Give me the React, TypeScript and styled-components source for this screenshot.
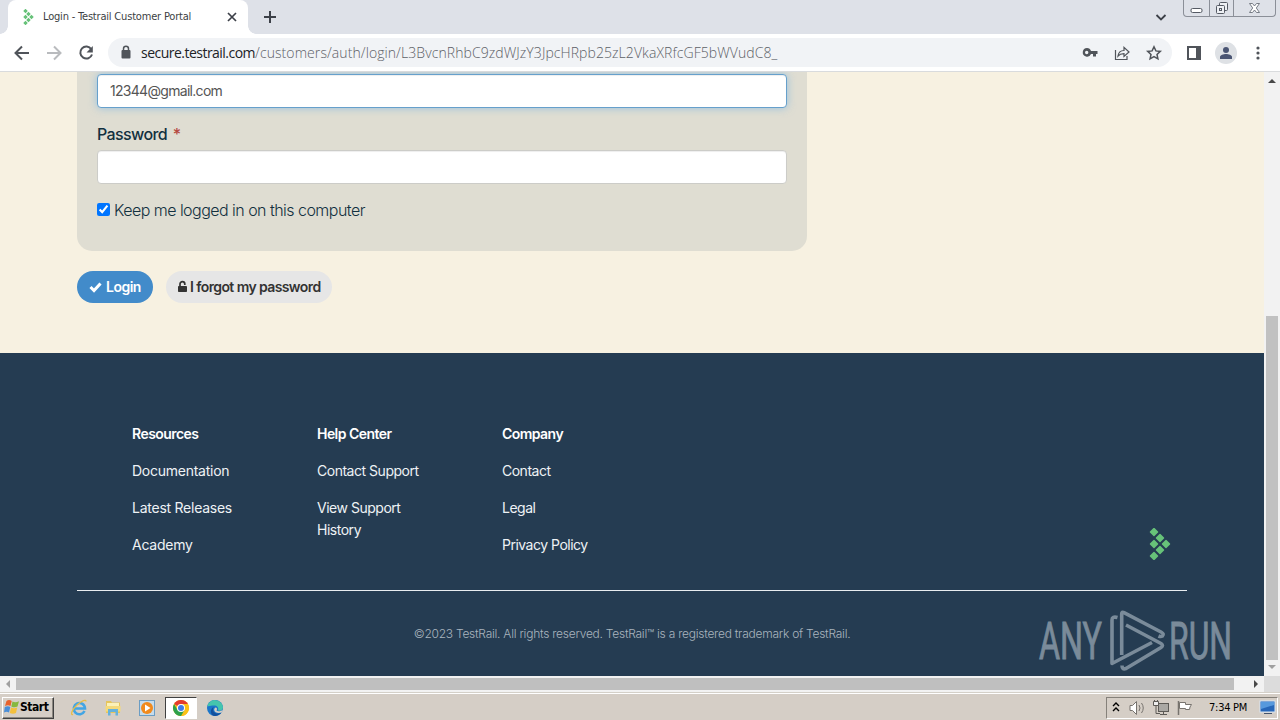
import React, { useState } from 'react';
import styled, { createGlobalStyle } from 'styled-components';

const FONT_BODY = "Inter, 'Liberation Sans', sans-serif";
const FONT_SYSTEM = "'DejaVu Sans Condensed', 'DejaVu Sans', sans-serif";
const FONT_URL = "'Open Sans', 'Noto Sans', sans-serif";

const COLOR_ICON = '#50545a';
const COLOR_NAVY = '#253c52';
const COLOR_INK = '#12303f';

const GlobalStyle = createGlobalStyle`
  * {
    box-sizing: border-box;
  }
  body {
    margin: 0;
    overflow: hidden;
  }
  p, ul, h4 {
    margin: 0;
    padding: 0;
  }
  svg {
    flex: none;
  }
`;

const StyledScreen = styled.div`
  width: 1280px;
  height: 720px;
  display: flex;
  flex-direction: column;
  overflow: hidden;
  background-color: #fff;
  font-family: ${FONT_BODY};
`;

type TextProps = { $tracking?: number };

/* browser chrome */

const StyledTabStrip = styled.div`
  height: 34px;
  flex: none;
  display: flex;
  align-items: flex-start;
  padding-left: 8px;
  background-color: #dee1e8;
`;

const StyledTab = styled.div`
  width: 240px;
  height: 34px;
  display: flex;
  align-items: center;
  padding: 0 10px 0 15px;
  border-radius: 8px 8px 0 0;
  background-color: #fff;
  position: relative;
  &::before,
  &::after {
    content: '';
    position: absolute;
    bottom: 0;
    width: 8px;
    height: 8px;
  }
  &::before {
    left: -8px;
    background: radial-gradient(circle at 0 0, transparent 7.5px, #fff 8px);
  }
  &::after {
    right: -8px;
    background: radial-gradient(circle at 100% 0, transparent 7.5px, #fff 8px);
  }
`;

const StyledTabTitle = styled.span<TextProps>`
  flex: 1;
  margin-left: 9px;
  font-family: ${FONT_SYSTEM};
  font-size: 11px;
  line-height: 16px;
  letter-spacing: ${({ $tracking = 0 }) => $tracking}px;
  white-space: nowrap;
  color: #3c3f44;
`;

const StyledNewTab = styled.div`
  height: 34px;
  display: flex;
  align-items: center;
  margin-left: 15px;
`;

const StyledTabSearch = styled.div`
  height: 34px;
  display: flex;
  align-items: center;
  margin-left: auto;
  margin-right: 16px;
`;

const StyledWindowControls = styled.div`
  width: 93px;
  height: 17px;
  display: flex;
  margin-right: 4px;
  border: 1px solid #8b8f98;
  border-top: 0;
  border-radius: 0 0 4px 4px;
`;

const StyledWindowButton = styled.div<{ $width: number }>`
  width: ${({ $width }) => $width}px;
  display: flex;
  align-items: center;
  justify-content: center;
  & + & {
    border-left: 1px solid #8b8f98;
  }
`;

const StyledToolbar = styled.div`
  height: 38px;
  flex: none;
  display: flex;
  align-items: center;
  padding: 0 13px;
  border-bottom: 1px solid #d9dbdd;
  background-color: #fff;
`;

const StyledNavigation = styled.div`
  width: 95px;
  display: flex;
  gap: 14px;
`;

const StyledOmnibox = styled.div`
  width: 1064px;
  height: 29px;
  flex: none;
  display: flex;
  align-items: center;
  padding: 0 9px;
  border-radius: 15px;
  background-color: #f1f3f6;
`;

const StyledUrl = styled.span<TextProps>`
  flex: 1;
  margin-left: 6px;
  font-family: ${FONT_URL};
  font-size: 14px;
  font-weight: 300;
  line-height: 20px;
  letter-spacing: ${({ $tracking = 0 }) => $tracking}px;
  white-space: nowrap;
  color: #5d6167;
`;

const StyledHost = styled.span<TextProps>`
  font-weight: 400;
  letter-spacing: ${({ $tracking = 0 }) => $tracking}px;
  color: #202226;
`;

const StyledOmniboxIcons = styled.div`
  display: flex;
  gap: 14px;
`;

const StyledToolbarIcons = styled.div`
  display: flex;
  align-items: center;
  margin-left: 13px;
`;

const StyledAvatar = styled.div`
  width: 22px;
  height: 22px;
  display: flex;
  align-items: center;
  justify-content: center;
  margin: 0 18px 0 12px;
  border-radius: 11px;
  background-color: #dee1e5;
`;

/* page */

const StyledViewport = styled.div`
  height: 604px;
  flex: none;
  display: flex;
`;

const StyledPage = styled.main`
  width: 1264px;
  height: 604px;
  display: flex;
  flex-direction: column;
  overflow: hidden;
  background-color: #f7f1e1;
`;

const StyledFormArea = styled.form`
  height: 281px;
  flex: none;
  padding-left: 77px;
`;

const StyledPanel = styled.div`
  width: 730px;
  height: 179px;
  display: flex;
  flex-direction: column;
  padding: 2px 20px 0;
  border-radius: 0 0 15px 15px;
  background-color: #dfddd2;
`;

const StyledInput = styled.input<{ $focused?: boolean }>`
  width: 690px;
  height: 34px;
  flex: none;
  padding: 0 12px 1px;
  border: 1px solid ${({ $focused }) => ($focused ? '#66a0cc' : '#ccccc8')};
  border-radius: 4px;
  outline: 0;
  box-shadow: ${({ $focused }) =>
    $focused
      ? 'inset 0 1px 1px rgba(0, 0, 0, 0.07), 0 0 8px rgba(102, 175, 233, 0.6)'
      : 'inset 0 1px 1px rgba(0, 0, 0, 0.07)'};
  background-color: #fff;
  font-family: ${FONT_BODY};
  font-size: 14px;
  letter-spacing: -0.7px;
  color: #555;
`;

const StyledLabel = styled.label<TextProps>`
  margin-top: 15px;
  margin-bottom: 4px;
  font-size: 16px;
  font-weight: 500;
  line-height: 23px;
  letter-spacing: ${({ $tracking = 0 }) => $tracking}px;
  color: ${COLOR_INK};
`;

const StyledRequired = styled.span`
  margin-left: 2px;
  color: #b5483f;
`;

const StyledRemember = styled.label<TextProps>`
  display: flex;
  align-items: center;
  gap: 4px;
  margin-top: 15px;
  font-size: 16px;
  font-weight: 300;
  line-height: 23px;
  letter-spacing: ${({ $tracking = 0 }) => $tracking}px;
  white-space: nowrap;
  color: ${COLOR_INK};
  input {
    width: 13px;
    height: 13px;
    margin: 0 0 2px;
    accent-color: #0075ff;
  }
`;

const StyledActions = styled.div`
  display: flex;
  gap: 13px;
  margin-top: 20px;
`;

const StyledButton = styled.button<{ $primary?: boolean; $width: number } & TextProps>`
  width: ${({ $width }) => $width}px;
  height: 32px;
  display: flex;
  align-items: center;
  gap: ${({ $primary }) => ($primary ? 4 : 2)}px;
  padding: 0 0 1px 12px;
  border: 0;
  border-radius: 16px;
  background-color: ${({ $primary }) => ($primary ? '#428bca' : '#e6e6e6')};
  font-family: ${FONT_BODY};
  font-size: 14px;
  font-weight: 600;
  letter-spacing: ${({ $tracking = 0 }) => $tracking}px;
  white-space: nowrap;
  color: ${({ $primary }) => ($primary ? '#fff' : '#333')};
`;

const StyledFooter = styled.footer`
  height: 323px;
  flex: none;
  padding: 70px 77px 0;
  background-color: ${COLOR_NAVY};
  color: #fff;
`;

const StyledFooterTop = styled.div`
  height: 168px;
  display: flex;
  padding-left: 55px;
  border-bottom: 1px solid #e9edf0;
`;

const StyledColumn = styled.ul`
  width: 185px;
  list-style: none;
`;

const StyledColumnTitle = styled.h4<TextProps>`
  margin-bottom: 15px;
  font-size: 14px;
  font-weight: 600;
  line-height: 22px;
  letter-spacing: ${({ $tracking = 0 }) => $tracking}px;
`;

const StyledColumnItem = styled.li<TextProps>`
  width: 120px;
  margin-bottom: 15px;
  font-size: 14px;
  font-weight: 400;
  line-height: 22px;
  letter-spacing: ${({ $tracking = 0 }) => $tracking}px;
  color: #eef2f5;
`;

const StyledFooterLogo = styled.div`
  margin: 105px 16px 0 auto;
`;

const StyledCopyright = styled.p<TextProps>`
  margin-top: 33px;
  font-size: 12px;
  font-weight: 300;
  line-height: 20px;
  letter-spacing: ${({ $tracking = 0 }) => $tracking}px;
  text-align: center;
  color: #a9b4be;
`;

const StyledWatermark = styled.div`
  position: absolute;
  left: 1036px;
  top: 608px;
  svg {
    display: block;
  }
`;

const StyledVerticalScroll = styled.div`
  width: 16px;
  height: 604px;
  display: flex;
  flex-direction: column;
  align-items: center;
  padding: 5px 0;
  background-color: #f2f2f2;
`;

const StyledVerticalThumb = styled.div`
  width: 12px;
  height: 344px;
  margin-top: auto;
  margin-bottom: 3px;
  background-color: #c1c1c1;
`;

const StyledHorizontalScroll = styled.div`
  height: 16px;
  flex: none;
  display: flex;
  align-items: center;
  background-color: #f2f2f2;
`;

const StyledHorizontalThumb = styled.div`
  width: 1218px;
  height: 12px;
  flex: none;
  background-color: #bfbfbf;
`;

const StyledScrollArrow = styled.div<{ $end?: boolean }>`
  width: ${({ $end }) => ($end ? 30 : 16)}px;
  display: flex;
  justify-content: ${({ $end }) => ($end ? 'flex-end' : 'center')};
  padding-right: ${({ $end }) => ($end ? 4 : 0)}px;
`;

const StyledScrollCorner = styled.div`
  width: 16px;
  height: 16px;
  background-color: #dcdcdc;
`;

/* taskbar */

const StyledTaskbar = styled.div`
  height: 28px;
  flex: none;
  display: flex;
  align-items: center;
  padding: 2px 2px 0;
  border-top: 1px solid #d4d0c8;
  box-shadow: inset 0 1px 0 #fff;
  background-color: #d5cec6;
`;

const StyledStart = styled.div<TextProps>`
  width: 52px;
  height: 22px;
  display: flex;
  align-items: center;
  padding-left: 1px;
  padding-bottom: 1px;
  border: 1px solid;
  border-color: #fff #404040 #404040 #fff;
  box-shadow: inset -1px -1px 0 #8b8780;
  font-family: ${FONT_SYSTEM};
  font-size: 12px;
  font-weight: 700;
  letter-spacing: ${({ $tracking = 0 }) => $tracking}px;
  color: #000;
`;

const StyledQuickLaunch = styled.div`
  display: flex;
  margin-left: 9px;
`;

const StyledTask = styled.div<{ $active?: boolean }>`
  width: 32px;
  height: 22px;
  display: flex;
  align-items: center;
  justify-content: center;
  margin-right: 2px;
  border: 1px solid;
  border-color: ${({ $active }) =>
    $active ? '#404040 #fff #fff #404040' : 'transparent'};
  background-color: ${({ $active }) => ($active ? '#fff' : 'transparent')};
`;

const StyledTray = styled.div`
  width: 172px;
  height: 22px;
  display: flex;
  align-items: center;
  margin-left: auto;
  padding-left: 5px;
  border: 1px solid;
  border-color: #85817a #fff #fff #85817a;
`;

const StyledTrayIcon = styled.div`
  display: flex;
  margin-left: 6px;
  &:nth-of-type(1) {
    margin-left: 8px;
  }
`;

const StyledClock = styled.span<TextProps>`
  width: 50px;
  margin-left: 15px;
  font-family: ${FONT_SYSTEM};
  font-size: 11px;
  letter-spacing: ${({ $tracking = 0 }) => $tracking}px;
  white-space: nowrap;
  color: #000;
`;

const DIAMONDS = [
  [5, 4],
  [11, 10],
  [17, 16],
  [11, 22],
  [5, 28],
  [5, 16],
];

const TestRailLogo: React.FC<{ width: number; height: number }> = ({
  width,
  height,
}) => (
  <svg width={width} height={height} viewBox="0 0 22 32">
    {DIAMONDS.map(([x, y]) => (
      <rect
        key={`${x}-${y}`}
        x={x - 3.2}
        y={y - 3.2}
        width="6.4"
        height="6.4"
        rx="0.7"
        fill="#67c279"
        transform={`rotate(45 ${x} ${y})`}
      />
    ))}
  </svg>
);

type TriangleProps = { direction: 'up' | 'down' | 'left' | 'right'; muted?: boolean };
const TRIANGLES = {
  up: '0,6 4,2 8,6',
  down: '0,2 4,6 8,2',
  left: '6,0 2,4 6,8',
  right: '2,0 6,4 2,8',
};
const Triangle: React.FC<TriangleProps> = ({ direction, muted }) => (
  <svg width="8" height="8">
    <polygon points={TRIANGLES[direction]} fill={muted ? '#a0a0a0' : '#484848'} />
  </svg>
);

const Watermark: React.FC = () => (
  <StyledWatermark>
    <svg width="204" height="66" opacity="0.6">
      <g
        fill="#b3c0ca"
        stroke="#b3c0ca"
        strokeWidth="0.9"
        fontFamily="Roboto, sans-serif"
        fontSize="52"
      >
        <text x="3" y="51" textLength="63" lengthAdjust="spacingAndGlyphs">
          ANY
        </text>
        <text x="133" y="51" textLength="63" lengthAdjust="spacingAndGlyphs">
          RUN
        </text>
      </g>
      <g
        fill="none"
        stroke="#b3c0ca"
        strokeWidth="3.6"
        strokeLinejoin="round"
      >
        <path d="M85.700 47V6q0-2.500 2.300-1.300L125 24q3.500 2 1.500 4-1.800 1-4 0" />
        <path d="M90 17l35 18.500q3 2 0 4L90 60.500q-4 1.500-4-3" />
        <path d="M81.500 9.500q-5.500-1.500-5.500 2.500v43.500L116 34.500" />
      </g>
    </svg>
  </StyledWatermark>
);

const COLUMNS = [
  {
    title: 'Resources',
    tracking: -0.25,
    items: ['Documentation', 'Latest Releases', 'Academy'],
  },
  {
    title: 'Help Center',
    tracking: -0.48,
    items: ['Contact Support', 'View Support History'],
  },
  {
    title: 'Company',
    tracking: -0.5,
    items: ['Contact', 'Legal', 'Privacy Policy'],
  },
];

const BrowserChrome: React.FC = () => (
  <>
    <StyledTabStrip>
      <StyledTab>
        <TestRailLogo width={11} height={16} />
        <StyledTabTitle $tracking={-0.19}>
          Login - Testrail Customer Portal
        </StyledTabTitle>
        <svg width="12" height="12" stroke="#3c4048" strokeWidth="1.7">
          <path d="M2 2l8 8M10 2l-8 8" />
        </svg>
      </StyledTab>
      <StyledNewTab>
        <svg width="14" height="14" stroke="#3c4048" strokeWidth="2">
          <path d="M7 1v12M1 7h12" />
        </svg>
      </StyledNewTab>
      <StyledTabSearch>
        <svg width="12" height="12" fill="none" stroke="#3c4048" strokeWidth="1.8">
          <path d="M1.500 4l4.500 4.500L10.500 4" />
        </svg>
      </StyledTabSearch>
      <StyledWindowControls>
        <StyledWindowButton $width={25}>
          <svg width="13" height="14" fill="#fff" stroke="#555a64">
            <rect x="1" y="7.5" width="11" height="4" rx="1.5" />
          </svg>
        </StyledWindowButton>
        <StyledWindowButton $width={25}>
          <svg width="14" height="14" fill="#eef0f4" stroke="#555a64">
            <rect x="4.5" y="1.5" width="8" height="8" rx="1" />
            <rect x="1.5" y="4.500" width="8" height="8" rx="1" />
            <rect x="4.5" y="7.5" width="2" height="2" />
          </svg>
        </StyledWindowButton>
        <StyledWindowButton $width={42}>
          <svg width="13" height="12" fill="#fff" stroke="#6a6f79" strokeWidth="0.9">
            <path d="M1.500 1.500h3l2 2.500 2-2.500h3L8.300 6l3.200 4.500h-3l-2-2.500-2 2.500h-3L4.700 6z" />
          </svg>
        </StyledWindowButton>
      </StyledWindowControls>
    </StyledTabStrip>
    <StyledToolbar>
      <StyledNavigation>
        <svg width="18" height="18" fill="none" stroke={COLOR_ICON} strokeWidth="2">
          <path d="M16 9H3M9 2.500L2.500 9 9 15.500" />
        </svg>
        <svg width="18" height="18" fill="none" stroke="#b9bbbe" strokeWidth="2">
          <path d="M2 9h13M9 2.500L15.500 9 9 15.500" />
        </svg>
        <svg width="18" height="18" fill="none" stroke={COLOR_ICON} strokeWidth="2">
          <path d="M14.300 5.200A6 6 0 1 0 15 10.500" />
          <path d="M15.800 2v6.500H9.500z" fill={COLOR_ICON} stroke="none" />
        </svg>
      </StyledNavigation>
      <StyledOmnibox>
        <svg width="18" height="18" fill={COLOR_ICON}>
          <rect x="4.5" y="6" width="9" height="8.5" rx="1" />
          <path
            d="M6.500 7V4.800a2.500 2.500 0 0 1 5 0V7"
            fill="none"
            stroke={COLOR_ICON}
            strokeWidth="1.5"
          />
        </svg>
        <StyledUrl $tracking={0.08}>
          <StyledHost $tracking={-0.52}>secure.testrail.com</StyledHost>
          /customers/auth/login/L3BvcnRhbC9zdWJzY3JpcHRpb25zL2VkaXRfcGF5bWVudC8_
        </StyledUrl>
        <StyledOmniboxIcons>
          <svg width="18" height="18" fill={COLOR_ICON}>
            <path
              fillRule="evenodd"
              d="M6 4a4.300 4.300 0 0 1 4 3h6.500v3H15v2.500h-3V10h-2a4.300 4.300 0 1 1-4-6zm-.300 2.800a1.700 1.700 0 1 0 0 3.400 1.700 1.700 0 0 0 0-3.400z"
            />
          </svg>
          <svg width="18" height="18" fill="none" stroke={COLOR_ICON} strokeWidth="1.2">
            <path d="M2.500 6v9.500H14V12" />
            <path d="M5 12c.500-4 3-5.500 6-5.500V3.300L16 8l-5 4.500V9.700c-2.500 0-4.500.500-6 2.300z" />
          </svg>
          <svg width="18" height="18" fill="none" stroke={COLOR_ICON} strokeWidth="1.5">
            <path d="M9 2.800l1.900 4.100 4.400.500-3.300 3 .900 4.400L9 12.600l-3.900 2.200.900-4.400-3.300-3 4.400-.500z" />
          </svg>
        </StyledOmniboxIcons>
      </StyledOmnibox>
      <StyledToolbarIcons>
        <svg width="18" height="18" fill="none" stroke={COLOR_ICON} strokeWidth="2">
          <rect x="3" y="3" width="12" height="12" />
          <path d="M13 3v12" strokeWidth="4" />
        </svg>
        <StyledAvatar>
          <svg width="14" height="14" fill="#4a5573">
            <circle cx="7" cy="4" r="3" />
            <path d="M1 13v-2c0-2 3.500-3 6-3s6 1 6 3v2z" />
          </svg>
        </StyledAvatar>
        <svg width="6" height="18" fill={COLOR_ICON}>
          <circle cx="3" cy="4" r="1.6" />
          <circle cx="3" cy="9" r="1.6" />
          <circle cx="3" cy="14" r="1.6" />
        </svg>
      </StyledToolbarIcons>
    </StyledToolbar>
  </>
);

const Taskbar: React.FC = () => (
  <StyledTaskbar>
    <StyledStart $tracking={-0.45}>
      <svg width="16" height="16">
        <path d="M2.500 2C4 .800 6 .800 7.700 2L6.500 7C5 6 3 6 1 7z" fill="#e8622c" />
        <path d="M8.500 2.400c1.800 1 4 1 6.500-.200L13.500 7.500c-2 1-4 1-6.200-.100z" fill="#86b840" />
        <path d="M.800 8c2-1 4-1 5.500 0L5 13.500c-1.500-1-3.500-1-5 0z" fill="#4a8ed8" />
        <path d="M7 8.400c2 1 4 1 6.200.100L12 14c-2 1-4 1-6.200 0z" fill="#f4c03c" />
      </svg>
      Start
    </StyledStart>
    <StyledQuickLaunch>
      <StyledTask>
        <svg width="18" height="18" fill="none">
          <path
            d="M14.500 12A5.600 5.600 0 1 1 15 9.500H5"
            stroke="#42a5e4"
            strokeWidth="2.6"
          />
          <path
            d="M3 15.500c-3 1-1-5 4-9.500s9-6 9-3.500"
            stroke="#e8bd45"
            strokeWidth="1.3"
          />
        </svg>
      </StyledTask>
      <StyledTask>
        <svg width="18" height="18">
          <path d="M2 2h5l1 1.500h8V14H2z" fill="#e6c55c" />
          <path d="M3 4h12v3H3z" fill="#fbf1b8" />
          <path d="M1.500 7h15v5.500h-15z" fill="#f4da7b" />
          <path d="M4 16.500V10h10v6.500h-2.500V13h-5v3.500z" fill="#65b2dc" />
        </svg>
      </StyledTask>
      <StyledTask>
        <svg width="18" height="18">
          <rect x="1.5" y="1.5" width="15" height="15" fill="#c6dcec" stroke="#6b9dc4" />
          <circle cx="9" cy="9" r="6" fill="#f18a1d" />
          <path d="M7 5.500v7L12.500 9z" fill="#fff" />
        </svg>
      </StyledTask>
      <StyledTask $active>
        <svg width="18" height="18">
          <circle cx="9" cy="9" r="8" fill="#fbc116" />
          <path d="M9 9L2.070 5A8 8 0 0 1 15.930 5z" fill="#e33b2e" />
          <path d="M9 9L9 5h6.930A8 8 0 0 1 9 17z" fill="#fbc116" />
          <path d="M2.070 5A8 8 0 0 0 9 17l3.500-6L9 9 5.500 11z" fill="#2da14c" />
          <circle cx="9" cy="9" r="4" fill="#fff" />
          <circle cx="9" cy="9" r="3" fill="#3f7de8" />
        </svg>
      </StyledTask>
      <StyledTask>
        <svg width="18" height="18">
          <circle cx="9" cy="9" r="8" fill="#1b76c9" />
          <path d="M1.300 7A8 8 0 0 1 17 8.500c0 2.500-2.500 3.500-5 3 1-3-1-5-4-5s-5 1-6.700.500z" fill="#45c5ad" />
          <path d="M8 8c-2 2-1 6 3 6.500 2 .300 3.500-.500 4.500-1.200C14 16 11 17 9 17 4 17 3.500 9.500 8 8z" fill="#134f9c" />
          <path d="M9.500 8.500c1.500 0 2 1.500 1 3 1.500 1.200 4 .800 6.500-.800l-1.400 2.800c-3 1-7.200.300-7.400-2.500 0-1 .400-2 1.300-2.500z" fill="#d5cec6" />
        </svg>
      </StyledTask>
    </StyledQuickLaunch>
    <StyledTray>
      <svg width="8" height="14" fill="none" stroke="#000" strokeWidth="1.4">
        <path d="M1 5l3-3 3 3M1 10l3-3 3 3" />
      </svg>
      <StyledTrayIcon>
        <svg width="18" height="18" fill="#fff" stroke="#77736e">
          <path d="M2 6.500h2.500l4-4v13l-4-4H2z" />
          <path d="M11 6q2 3 0 6M13.500 4q3.500 5 0 10" fill="none" />
        </svg>
      </StyledTrayIcon>
      <StyledTrayIcon>
        <svg width="18" height="18" fill="#eee" stroke="#5d5a56">
          <rect x="6.5" y="4.5" width="10" height="8" fill="#aaa8a4" />
          <path d="M1.500 2.500h5v4h-5zM2.500 1v2M5.500 1v2" />
          <path d="M4 6.500v8h4M8 15.500h7M11.500 12.500v3" fill="none" />
        </svg>
      </StyledTrayIcon>
      <StyledTrayIcon>
        <svg width="18" height="18" fill="#fff" stroke="#77736e">
          <path d="M2.500 2v14" strokeWidth="1.5" />
          <path d="M3.500 3.500h6v2h6q-2 2.500-2 5h-4v-1h-6z" />
        </svg>
      </StyledTrayIcon>
      <StyledClock $tracking={-0.25}>7:34 PM</StyledClock>
      <svg width="18" height="16">
        <rect x="1" y="1" width="15" height="11" fill="#2766b8" stroke="#d9e6f3" />
        <path d="M2 2h13v3L2 9z" fill="#5799dd" />
        <path d="M5 13h8v1H5z" fill="#44536b" />
      </svg>
    </StyledTray>
  </StyledTaskbar>
);

const App: React.FC = () => {
  const [email, setEmail] = useState('12344@gmail.com');
  const [password, setPassword] = useState('');
  const [remember, setRemember] = useState(true);
  return (
    <StyledScreen>
      <GlobalStyle />
      <BrowserChrome />
      <StyledViewport>
        <StyledPage>
          <StyledFormArea onSubmit={(e) => e.preventDefault()}>
            <StyledPanel>
              <StyledInput
                $focused
                value={email}
                onChange={(e) => setEmail(e.target.value)}
              />
              <StyledLabel htmlFor="password" $tracking={-0.6}>
                Password <StyledRequired>*</StyledRequired>
              </StyledLabel>
              <StyledInput
                id="password"
                type="password"
                value={password}
                onChange={(e) => setPassword(e.target.value)}
              />
              <StyledRemember $tracking={-0.53}>
                <input
                  type="checkbox"
                  checked={remember}
                  onChange={() => setRemember(!remember)}
                />
                Keep me logged in on this computer
              </StyledRemember>
            </StyledPanel>
            <StyledActions>
              <StyledButton $primary $width={76} $tracking={-0.5} type="submit">
                <svg width="13" height="12" fill="none" stroke="#fff" strokeWidth="3">
                  <path d="M1.500 6l3.500 3.500L11.500 2.500" />
                </svg>
                Login
              </StyledButton>
              <StyledButton $width={166} $tracking={-0.6} type="button">
                <svg width="10" height="13" fill="#333">
                  <rect x="0" y="6" width="9" height="6" rx="0.8" />
                  <path
                    d="M2 6.500V4a2.400 2.400 0 0 1 4.800 0v1"
                    fill="none"
                    stroke="#333"
                    strokeWidth="1.7"
                  />
                </svg>
                I forgot my password
              </StyledButton>
            </StyledActions>
          </StyledFormArea>
          <StyledFooter>
            <StyledFooterTop>
              {COLUMNS.map(({ title, tracking, items }) => (
                <StyledColumn key={title}>
                  <StyledColumnTitle $tracking={-0.55}>{title}</StyledColumnTitle>
                  {items.map((item) => (
                    <StyledColumnItem key={item} $tracking={tracking}>
                      {item}
                    </StyledColumnItem>
                  ))}
                </StyledColumn>
              ))}
              <StyledFooterLogo>
                <TestRailLogo width={22} height={32} />
              </StyledFooterLogo>
            </StyledFooterTop>
            <StyledCopyright $tracking={-0.25}>
              ©2023 TestRail. All rights reserved. TestRail™ is a registered
              trademark of TestRail.
            </StyledCopyright>
          </StyledFooter>
        </StyledPage>
        <StyledVerticalScroll>
          <Triangle direction="up" />
          <StyledVerticalThumb />
          <Triangle direction="down" muted />
        </StyledVerticalScroll>
      </StyledViewport>
      <StyledHorizontalScroll>
        <StyledScrollArrow>
          <Triangle direction="left" muted />
        </StyledScrollArrow>
        <StyledHorizontalThumb />
        <StyledScrollArrow $end>
          <Triangle direction="right" />
        </StyledScrollArrow>
        <StyledScrollCorner />
      </StyledHorizontalScroll>
      <Taskbar />
      <Watermark />
    </StyledScreen>
  );
};

export default App;
